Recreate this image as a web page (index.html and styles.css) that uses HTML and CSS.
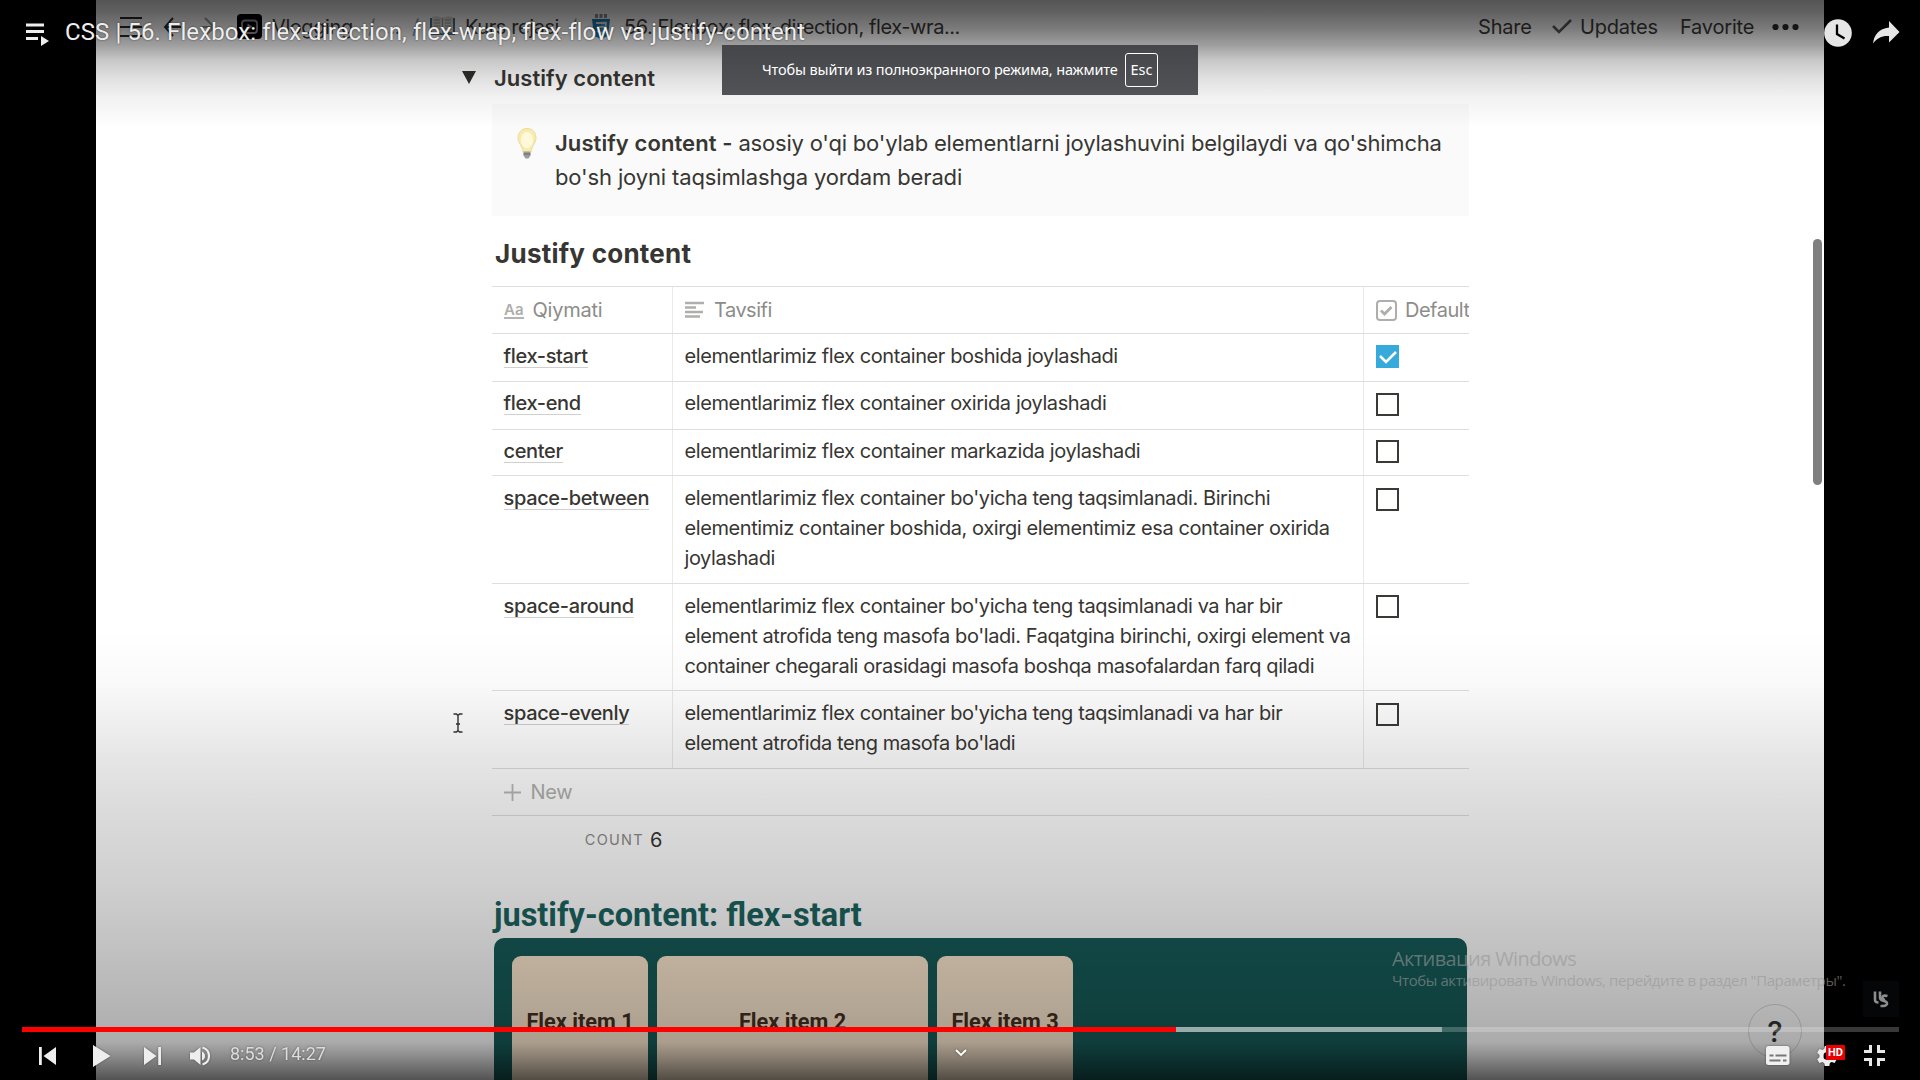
FILE: index.html
```html
<!DOCTYPE html>
<html lang="uz">
<head>
<meta charset="utf-8">
<title>CSS | 56. Flexbox</title>
<link rel="stylesheet" href="styles.css">
</head>
<body>
<div class="player">
  <main class="page">
    <nav class="topbar">
      <svg class="ico menu" width="22" height="22" viewBox="0 0 22 22"><path d="M0 2h22M0 11h22M0 20h22" stroke="#2c2c2a" stroke-width="2"/></svg>
      <svg class="ico back" width="19" height="20" viewBox="0 0 19 20"><path d="M10 1L2 10l8 9M2 10h16" fill="none" stroke="#2c2c2a" stroke-width="2"/></svg>
      <svg class="ico fwd" width="14" height="20" viewBox="0 0 14 20"><path d="M3 1l9 9-9 9M0 10h12" fill="none" stroke="#999" stroke-width="2"/></svg>
      <svg class="ico vlog" width="25" height="25" viewBox="0 0 25 25"><rect width="25" height="25" rx="4"/><rect x="5" y="6.500" width="15" height="12.500" rx="3" fill="none" stroke="#999" stroke-width="1.800"/><path d="M10.500 9.500l5 3.200-5 3.200z" fill="#aaa"/></svg>
      <span class="crumb c-vlog">Vlogging</span>
      <span class="sep s1">/</span><span class="crumb c-more">...</span><span class="sep s2">/</span>
      <svg class="ico book" width="25" height="19" viewBox="0 0 25 19"><path d="M0 2h25v17H0z" fill="#46708f"/><path d="M2 1Q8-1 12.500 2 17-1 23 1v15.500q-6-1.500-10.500 1Q8 15 2 16.500z" fill="#dcdcd6"/><path d="M12.500 2v15M4 4h6M4 7h6M4 10h6M4 13h6M15 4h6M15 7h6M15 10h6M15 13h6" stroke="#999" stroke-width="1"/></svg>
      <span class="crumb c-kurs">Kurs rejasi</span>
      <span class="sep s3">/</span>
      <svg class="ico css3" width="18" height="25" viewBox="0 0 18 25"><path d="M0 5h18l-2 17-7 3-7-3z" fill="#1f7bb4"/><path d="M9 7h6l-1 13-5 2z" fill="#3a96c6"/><path d="M4 9h10l-1 8-4 2-4-2M5 13h8" fill="none" stroke="#d8e2e8" stroke-width="1.800"/><path d="M3 1h3M3 3h3M7.500 1h3M7.500 3h3M12 1h3M12 3h3" stroke="#222" stroke-width="1.200"/></svg>
      <span class="crumb c-title">56. Flexbox: flex-direction, flex-wra...</span>
      <span class="act a-share">Share</span>
      <svg class="ico tick" width="20" height="15" viewBox="0 0 20 15"><path d="M1 7l6 6L19 1" fill="none" stroke="#5a5a58" stroke-width="2.600"/></svg>
      <span class="act a-upd">Updates</span>
      <span class="act a-fav">Favorite</span>
      <svg class="ico dots" width="27" height="8" viewBox="0 0 27 8"><g fill="#2c2c2a"><circle cx="3.500" cy="4" r="3.100"/><circle cx="13.500" cy="4" r="3.100"/><circle cx="23.500" cy="4" r="3.100"/></g></svg>
    </nav>
    <article class="content">
      <div class="toggle">
        <svg width="14" height="13" viewBox="0 0 14 13"><path d="M0 0h14L7 13z" fill="#2f2f2c"/></svg>
        <span class="toggle-text">Justify content</span>
      </div>
      <div class="callout">
        <svg class="bulb" width="20" height="31" viewBox="0 0 20 31"><path d="M10 .5C4 .5 1 5 1 10c0 5 4 7 5 14h8c1-7 5-9 5-14 0-5-3-9.500-9-9.500z" fill="#f8ebae" stroke="#ecdc98"/><ellipse cx="10" cy="12" rx="6" ry="8" fill="#fff9dc"/><path d="M6.500 23.500h7v4l-2 3h-3l-2-3z" fill="#9b9b9e"/><path d="M6.500 26h7" stroke="#666" stroke-width="1"/></svg>
        <p><span class="l1"><b>Justify content -</b> asosiy o'qi bo'ylab elementlarni joylashuvini belgilaydi va qo'shimcha</span><br><span class="l2">bo'sh joyni taqsimlashga yordam beradi</span></p>
      </div>
      <h3><span>Justify content</span></h3>
      <div class="table">
        <div class="row head">
          <div class="cell"><span class="aa">Aa</span><span class="h-q">Qiymati</span></div>
          <div class="cell"><svg width="20" height="18" viewBox="0 0 20 18"><path d="M0 2h19M0 6.500h11M0 11h18M0 15.500h15" stroke="#aeaeac" stroke-width="2.600"/></svg><span class="h-t">Tavsifi</span></div>
          <div class="cell"><svg width="21" height="21" viewBox="0 0 21 21"><rect x="1" y="1" width="19" height="19" rx="3" fill="none" stroke="#aeaeac" stroke-width="2"/><path d="M5 10.500l3.500 3.500L15.500 7" fill="none" stroke="#aeaeac" stroke-width="2.800"/></svg><span class="h-d">Default</span></div>
        </div>
        <div class="row r48"><div class="cell"><a>flex-start</a></div><div class="cell">elementlarimiz flex container boshida joylashadi</div><div class="cell"><span class="box on"><svg width="23" height="23" viewBox="0 0 23 23"><path d="M4 11l6 6L20 7" fill="none" stroke="#fff" stroke-width="2.600"/></svg></span></div></div>
        <div class="row r48 up"><div class="cell"><a>flex-end</a></div><div class="cell">elementlarimiz flex container oxirida joylashadi</div><div class="cell"><span class="box low"></span></div></div>
        <div class="row r46 up"><div class="cell"><a>center</a></div><div class="cell">elementlarimiz flex container markazida joylashadi</div><div class="cell"><span class="box"></span></div></div>
        <div class="row r108"><div class="cell"><a>space-between</a></div><div class="cell">elementlarimiz flex container bo'yicha teng taqsimlanadi. Birinchi<br>elementimiz container boshida, oxirgi elementimiz esa container oxirida<br>joylashadi</div><div class="cell"><span class="box low"></span></div></div>
        <div class="row r107"><div class="cell"><a>space-around</a></div><div class="cell">elementlarimiz flex container bo'yicha teng taqsimlanadi va har bir<br>element atrofida teng masofa bo'ladi. Faqatgina birinchi, oxirgi element va<br>container chegarali orasidagi masofa boshqa masofalardan farq qiladi</div><div class="cell"><span class="box"></span></div></div>
        <div class="row r78"><div class="cell"><a>space-evenly</a></div><div class="cell">elementlarimiz flex container bo'yicha teng taqsimlanadi va har bir<br>element atrofida teng masofa bo'ladi</div><div class="cell"><span class="box low"></span></div></div>
        <div class="new"><svg width="17" height="17" viewBox="0 0 17 17"><path d="M0 8.500h17M8.500 0v17" stroke="#b9b9b7" stroke-width="1.800"/></svg>New</div>
        <div class="count"><span class="count-label">COUNT</span><span>6</span></div>
      </div>
      <h2><span>justify-content: flex-start</span></h2>
      <div class="demo">
        <div class="item narrow">Flex item 1</div>
        <div class="item wide">Flex item 2</div>
        <div class="item narrow">Flex item 3</div>
      </div>
    </article>
    <div class="scrollbar"></div>
    <div class="help">?</div>
    <svg class="ibeam" width="10" height="20" viewBox="0 0 10 20"><path d="M.5 1h3L5 2.500 6.500 1h3M5 2.500v15M.5 19h3L5 17.500 6.500 19h3M3 11h4" fill="none" stroke="#333" stroke-width="1.400"/></svg>
  </main>
  <div class="shade"></div>
  <div class="watermark">
    <svg width="16" height="17" viewBox="0 0 16 17"><path d="M2 .5v8.500q0 2.500 3.500 2.500M7 .5v6q0 2 2.500 3l3 1q2 .8 1.300 2.800-.8 2-6.300 1.700M14.500 5q-4.500-1-5 1t2.500 3" fill="none" stroke="#8b8d90" stroke-width="2.600"/></svg>
  </div>

  <header class="yt-top">
    <svg class="queue" width="24" height="24" viewBox="0 0 24 24"><path d="M0 2h18M0 8.500h18M0 15.500h12" stroke="#eee" stroke-width="3"/><path d="M15 13l8 5-8 5z" fill="#eee"/></svg>
    <span class="yt-title">CSS | 56. Flexbox: flex-direction, flex-wrap, flex-flow va justify-content</span>
    <svg class="clock" width="28" height="28" viewBox="0 0 28 28"><circle cx="14" cy="14" r="13.800" fill="#e6e6e6"/><path d="M13 5.500v9.500l7.500 4.500" fill="none" stroke="#000" stroke-width="2.300"/></svg>
    <svg class="share" width="27" height="23" viewBox="0 0 27 23"><path d="M16 0l10.500 11L16 21.500v-6.500C9 14.500 4 17 0 22.500 1 14 6 7.500 16 6.500z" fill="#e6e6e6"/></svg>
  </header>

  <div class="notice"><span class="notice-text">Чтобы выйти из полноэкранного режима, нажмите</span><kbd>Esc</kbd></div>

  <div class="activation"><div class="act-1"><span>Активация Windows</span></div><div class="act-2"><span>Чтобы активировать Windows, перейдите в раздел "Параметры".</span></div></div>

  <footer class="controls">
    <div class="progress"><div class="played" style="width:1154px"></div><div class="buffered" style="width:266px"></div></div>
    <div class="buttons">
      <svg class="prev" width="17" height="18" viewBox="0 0 17 18"><path d="M0 0h2.800v18H0zM17 0v18L4.500 9z" fill="#eee"/></svg>
      <svg class="play" width="18" height="22" viewBox="0 0 18 22"><path d="M0 0l17.500 11L0 22z" fill="#eee"/></svg>
      <svg class="next" width="17" height="18" viewBox="0 0 17 18"><path d="M14.200 0H17v18h-2.800zM0 0v18l12.500-9z" fill="#eee"/></svg>
      <svg class="vol" width="21" height="20" viewBox="0 0 21 20"><path d="M0 6.500h4L10.500 1v18L4 13.500H0z" fill="#eee"/><path d="M12 5.500q3 1.500 3 4.500t-3 4.500z" fill="#eee"/><path d="M12.500 1.500q6.500 2 6.500 8.500t-6.500 8.500" fill="none" stroke="#eee" stroke-width="2.200"/></svg>
      <span class="time">8:53 / 14:27</span>
      <svg class="chev" width="12" height="8" viewBox="0 0 12 8"><path d="M1 1l5 5 5-5" fill="none" stroke="#fff" stroke-width="1.900"/></svg>
      <svg class="cc" width="24" height="19" viewBox="0 0 24 19"><rect width="23.500" height="19" rx="2.500" fill="#f0f0f0"/><path d="M3.500 9.500h4M9.500 9.500h11M3.500 14.500h11M17 14.500h3.500" stroke="#777" stroke-width="2"/></svg>
      <div class="gear">
        <svg width="22" height="22" viewBox="0 0 22 22"><path fill="#eee" fill-rule="evenodd" d="M8.700 1h4.600l.6 3 1.800 1 2.900-1 2.200 3.800-2.300 2v2.400l2.300 2-2.200 3.800-2.900-1-1.800 1-.6 3H8.700l-.6-3-1.800-1-2.900 1-2.200-3.800 2.300-2V9.800l-2.300-2L3.400 4l2.900 1 1.800-1zM11 7.200a3.800 3.800 0 100 7.600 3.800 3.800 0 000-7.600z"/></svg>
        <span class="hd">HD</span>
      </div>
      <svg class="exit" width="21" height="21" viewBox="0 0 21 21"><path d="M6.500 0v6.500H0M14.500 0v6.500H21M0 14.500h6.500V21M21 14.500h-6.500V21" fill="none" stroke="#e8e8e8" stroke-width="3"/></svg>
    </div>
  </footer>
</div>
</body>
</html>
```
FILE: styles.css
```css
* { box-sizing: border-box; }
body { margin: 0; background: #000; font-family: Inter, "Liberation Sans", sans-serif; color: #373632; }
svg { display: block; flex: none; }
p, h2, h3 { margin: 0; }
span { white-space: nowrap; }
.player { position: relative; width: 1920px; height: 1080px; overflow: hidden; background: #000; }
.page { position: relative; width: 1728px; height: 1080px; margin: 0 auto; overflow: hidden; background: #fff; }

.topbar { display: flex; align-items: center; height: 52px; padding: 1px 0 0 24px; font-size: 20px; letter-spacing: -.42px; color: #3c3c3a; }
.topbar > * { flex: none; }
.back { margin-left: 21px; }
.fwd { margin-left: 20px; }
.vlog { margin-left: 21px; }
.c-vlog { width: 96px; margin-left: 10px; }
.sep { width: 16px; color: #999; }
.c-more { width: 28px; }
.s2 { width: 18px; }
.c-kurs { width: 105px; margin-left: 10px; }
.s3 { width: 22px; }
.c-title { width: 854px; margin-left: 14px; }
.act { letter-spacing: -.2px; }
.a-share { width: 74px; }
.a-upd { width: 100px; margin-left: 8px; }
.a-fav { width: 92px; }
.book { margin-top: -2px; }

.content { width: 977px; margin-left: 396px; }
.toggle { display: flex; align-items: center; gap: 18px; height: 52px; margin-left: -30px; font-size: 22px; font-weight: 600; letter-spacing: .05px; }
.toggle svg { margin-top: -2px; }
.callout { display: flex; gap: 18px; height: 112px; padding: 22px 0 0 25px; background: #fafafa; font-size: 22px; line-height: 34px; letter-spacing: -.2px; }
.callout b { font-weight: 600; letter-spacing: .08px; }
.l2 { letter-spacing: -.14px; }
.bulb { margin-top: 2px; }
h3 { height: 70px; padding: 18px 0 0 3px; font-size: 26px; line-height: 40px; font-weight: 650; letter-spacing: .25px; }

.table { overflow: hidden; border-top: 1px solid #dededc; font-size: 20px; line-height: 30px; letter-spacing: -.415px; }
.row { display: grid; grid-template-columns: 181px 691px 1fr; border-bottom: 1px solid #dededc; }
.cell { padding: 7px 0 0 11.500px; border-right: 1px solid #e9e9e8; white-space: nowrap; }
.up .cell { padding-top: 6px; }
.cell:last-child { padding-left: 12px; border-right: 0; }
.head { height: 47px; color: #8c8c8a; }
.head .cell { display: flex; align-items: center; gap: 9px; padding-top: 0; padding-bottom: 0; padding-left: 12px; }
.head .cell:last-child { gap: 8px; }
.h-q { letter-spacing: -.25px; }
.h-t { letter-spacing: -.5px; }
.h-d { letter-spacing: -.5px; }
.aa { border-bottom: 2px solid #b4b4b2; font-size: 15px; line-height: 15px; font-weight: 600; letter-spacing: 0; color: #aeaeac; }
.r48 { height: 48px; }
.r46 { height: 46px; }
.r107 { height: 107px; }
.r108 { height: 108px; }
.r78 { height: 78px; }
.row a { display: inline-block; height: 27px; border-bottom: 1px solid #d0d0ce; font-weight: 500; letter-spacing: -.35px; }
.box { display: block; width: 23px; height: 23px; margin-top: 4px; border: 2px solid #3a3936; }
.box.low { margin-top: 5px; }
.box.on { border: 0; background: #37aadc; }
.new { display: flex; align-items: center; gap: 10px; height: 47px; padding-left: 11.500px; border-bottom: 1px solid #dededc; letter-spacing: -.3px; color: #b0b0ae; }
.count { display: flex; align-items: center; justify-content: flex-end; gap: 6px; width: 170px; height: 47px; }
.count-label { font-size: 14.500px; letter-spacing: 1.3px; color: #8c8c8a; }
h2 { height: 75px; padding: 30px 0 0 2px; font-family: Roboto, sans-serif; font-size: 32.500px; line-height: 44px; font-weight: 700; color: #1b645f; }
.demo { display: flex; gap: 9px; width: 973px; height: 200px; margin-left: 2px; padding: 18px; border-radius: 10px; background: #165c59; }
.item { height: 182px; padding-top: 52px; border-radius: 9px; background: #ffebd2; font-family: Roboto, sans-serif; font-size: 21.700px; line-height: 28px; font-weight: 700; text-align: center; color: #44301f; }
.narrow { width: 136px; }
.wide { width: 271px; }

.scrollbar { position: absolute; right: 2px; top: 239px; width: 9px; height: 246px; border-radius: 5px; background: #7f7f7f; }
.help { position: absolute; left: 1652px; top: 1004px; width: 54px; height: 54px; border: 1.500px solid rgba(0,0,0,.16); border-radius: 50%; font-size: 29px; line-height: 53px; font-weight: 500; text-align: center; color: #333; }
.ibeam { position: absolute; left: 357px; top: 713px; }

.shade { position: absolute; inset: 0; background:
  linear-gradient(to bottom, rgba(0,0,0,.67) 0, rgba(0,0,0,.62) 12px, rgba(0,0,0,.52) 28px, rgba(0,0,0,.38) 45px, rgba(0,0,0,.22) 60px, rgba(0,0,0,.12) 78px, rgba(0,0,0,.05) 98px, transparent 128px),
  linear-gradient(to bottom, transparent 630px, rgba(0,0,0,.02) 680px, rgba(0,0,0,.1) 760px, rgba(0,0,0,.15) 820px, rgba(0,0,0,.185) 880px, rgba(0,0,0,.24) 945px, rgba(0,0,0,.29) 1005px, rgba(0,0,0,.33) 1042px, rgba(0,0,0,.45) 1056px, rgba(0,0,0,.68) 1080px); }
.watermark { position: absolute; left: 1863px; top: 981px; display: flex; align-items: center; justify-content: center; width: 36px; height: 36px; background: #040608; }

.yt-top { position: absolute; left: 0; top: 0; display: flex; width: 100%; padding-left: 26px; }
.queue { margin-top: 23px; }
.yt-title { width: 1759px; margin: 16px 0 0 15px; font-family: Roboto, sans-serif; font-size: 24px; line-height: 32px; letter-spacing: .09px; color: #eee; text-shadow: 0 0 2px rgba(0,0,0,.6); }
.clock { margin-top: 19px; }
.share { margin: 21px 0 0 21px; }

.notice { position: absolute; left: 722px; top: 45px; display: flex; align-items: center; width: 476px; height: 50px; padding-left: 40px; background: linear-gradient(#44464a, #515357); color: #fff; font-family: "Noto Sans", sans-serif; font-size: 14.500px; }
.notice-text { width: 363px; margin-top: -2px; letter-spacing: -.14px; }
kbd { width: 33px; height: 34px; border: 1px solid #fff; border-radius: 3px; font: inherit; line-height: 31px; text-align: center; }

.activation { position: absolute; left: 1392px; top: 945px; font-family: "Open Sans", "Noto Sans", sans-serif; color: rgba(150,150,150,.62); white-space: nowrap; }
.act-1 { font-size: 20px; line-height: 28px; letter-spacing: -.6px; }
.act-2 { font-size: 15px; line-height: 15px; letter-spacing: -.4px; }

.controls { position: absolute; left: 0; top: 1027px; width: 100%; }
.progress { display: flex; width: 1877px; height: 5px; margin-left: 22px; background: rgba(255,255,255,.22); }
.played { background: #f00; }
.buffered { background: rgba(255,255,255,.45); }
.buttons { display: flex; align-items: center; height: 47px; padding-left: 39px; filter: drop-shadow(0 0 1px rgba(0,0,0,.4)); }
.play { margin-left: 37px; }
.next { margin-left: 33px; }
.vol { margin-left: 29px; }
.time { width: 725px; margin: -4px 0 0 19px; font-family: Roboto, sans-serif; font-size: 18px; color: #ddd; }
.chev { margin-top: -5px; }
.cc { margin-left: 799px; }
.gear { position: relative; margin-left: 26px; }
.hd { position: absolute; left: 10px; top: 0; width: 19px; height: 15px; border-radius: 1px; background: #e60000; color: #fff; font-family: Roboto, sans-serif; font-size: 11px; line-height: 15px; font-weight: 700; letter-spacing: 0; text-align: center; }
.exit { margin-left: 26px; }
```
